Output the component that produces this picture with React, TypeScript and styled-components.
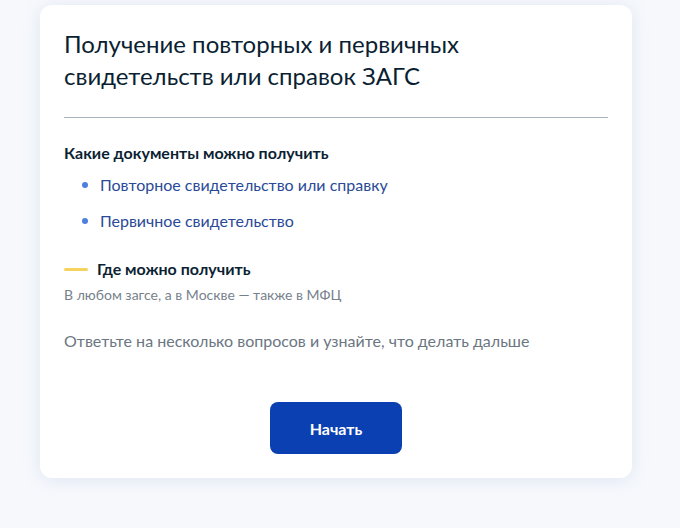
import styled, { createGlobalStyle } from 'styled-components';

const GlobalStyle = createGlobalStyle`
  html, body {
    margin: 0;
    padding: 0;
  }

  body {
    background: #f6f8fc;
    font-family: Lato, 'Noto Sans', Arial, sans-serif;
    -webkit-font-smoothing: antialiased;
  }
`;

const Page = styled.div`
  width: 680px;
  height: 528px;
  padding: 5px 48px 0 40px;
  box-sizing: border-box;
  background: #f6f8fc;
`;

const Card = styled.section`
  width: 592px;
  box-sizing: border-box;
  padding: 23px 24px 24px;
  background: #ffffff;
  border-radius: 12px;
  box-shadow: 0 2px 18px rgba(140, 160, 205, 0.2);
`;

const Title = styled.h1`
  margin: 0;
  max-width: 420px;
  font-size: 24px;
  line-height: 32px;
  font-weight: 400;
  color: #0b1f33;
`;

const Divider = styled.hr`
  margin: 25px 0 24px;
  border: none;
  border-top: 1px solid #a9b3bd;
`;

const SectionTitle = styled.h3`
  display: flex;
  align-items: center;
  gap: 9px;
  margin: 0;
  font-size: 16px;
  line-height: 22px;
  font-weight: 700;
  color: #0b1f33;
`;

const Marker = styled.span`
  width: 24px;
  height: 3px;
  border-radius: 2px;
  background: #f6d35f;
`;

const DocList = styled.ul`
  list-style: none;
  margin: 9px 0 0;
  padding: 0 0 0 18px;
  display: flex;
  flex-direction: column;
  gap: 12px;
`;

const DocItem = styled.li`
  display: flex;
  align-items: center;
  gap: 12px;
  font-size: 16px;
  line-height: 24px;
  color: #2a4a97;

  &::before {
    content: '';
    width: 6px;
    height: 6px;
    border-radius: 50%;
    background: #4e7fe0;
    flex-shrink: 0;
  }
`;

const WhereBlock = styled.div`
  margin-top: 25px;
`;

const Hint = styled.p`
  margin: 5px 0 0;
  font-size: 14px;
  line-height: 20px;
  color: #77818c;
`;

const Lead = styled.p`
  margin: 24px 0 0;
  font-size: 16px;
  line-height: 24px;
  color: #6b7681;
`;

const Actions = styled.div`
  display: flex;
  justify-content: center;
  margin-top: 49px;
`;

const PrimaryButton = styled.button`
  width: 132px;
  height: 52px;
  border: none;
  border-radius: 8px;
  background: #0b40b3;
  color: #ffffff;
  font-family: inherit;
  font-size: 16px;
  font-weight: 700;
  cursor: pointer;
`;

const documents = ['Повторное свидетельство или справку', 'Первичное свидетельство'];

export default function App() {
  return (
    <>
      <GlobalStyle />
      <Page>
        <Card>
          <Title>Получение повторных и первичных свидетельств или справок ЗАГС</Title>
          <Divider />

          <SectionTitle>Какие документы можно получить</SectionTitle>
          <DocList>
            {documents.map((doc) => (
              <DocItem key={doc}>{doc}</DocItem>
            ))}
          </DocList>

          <WhereBlock>
            <SectionTitle>
              <Marker />
              Где можно получить
            </SectionTitle>
            <Hint>В любом загсе, а в Москве — также в МФЦ</Hint>
          </WhereBlock>

          <Lead>Ответьте на несколько вопросов и узнайте, что делать дальше</Lead>

          <Actions>
            <PrimaryButton>Начать</PrimaryButton>
          </Actions>
        </Card>
      </Page>
    </>
  );
}
